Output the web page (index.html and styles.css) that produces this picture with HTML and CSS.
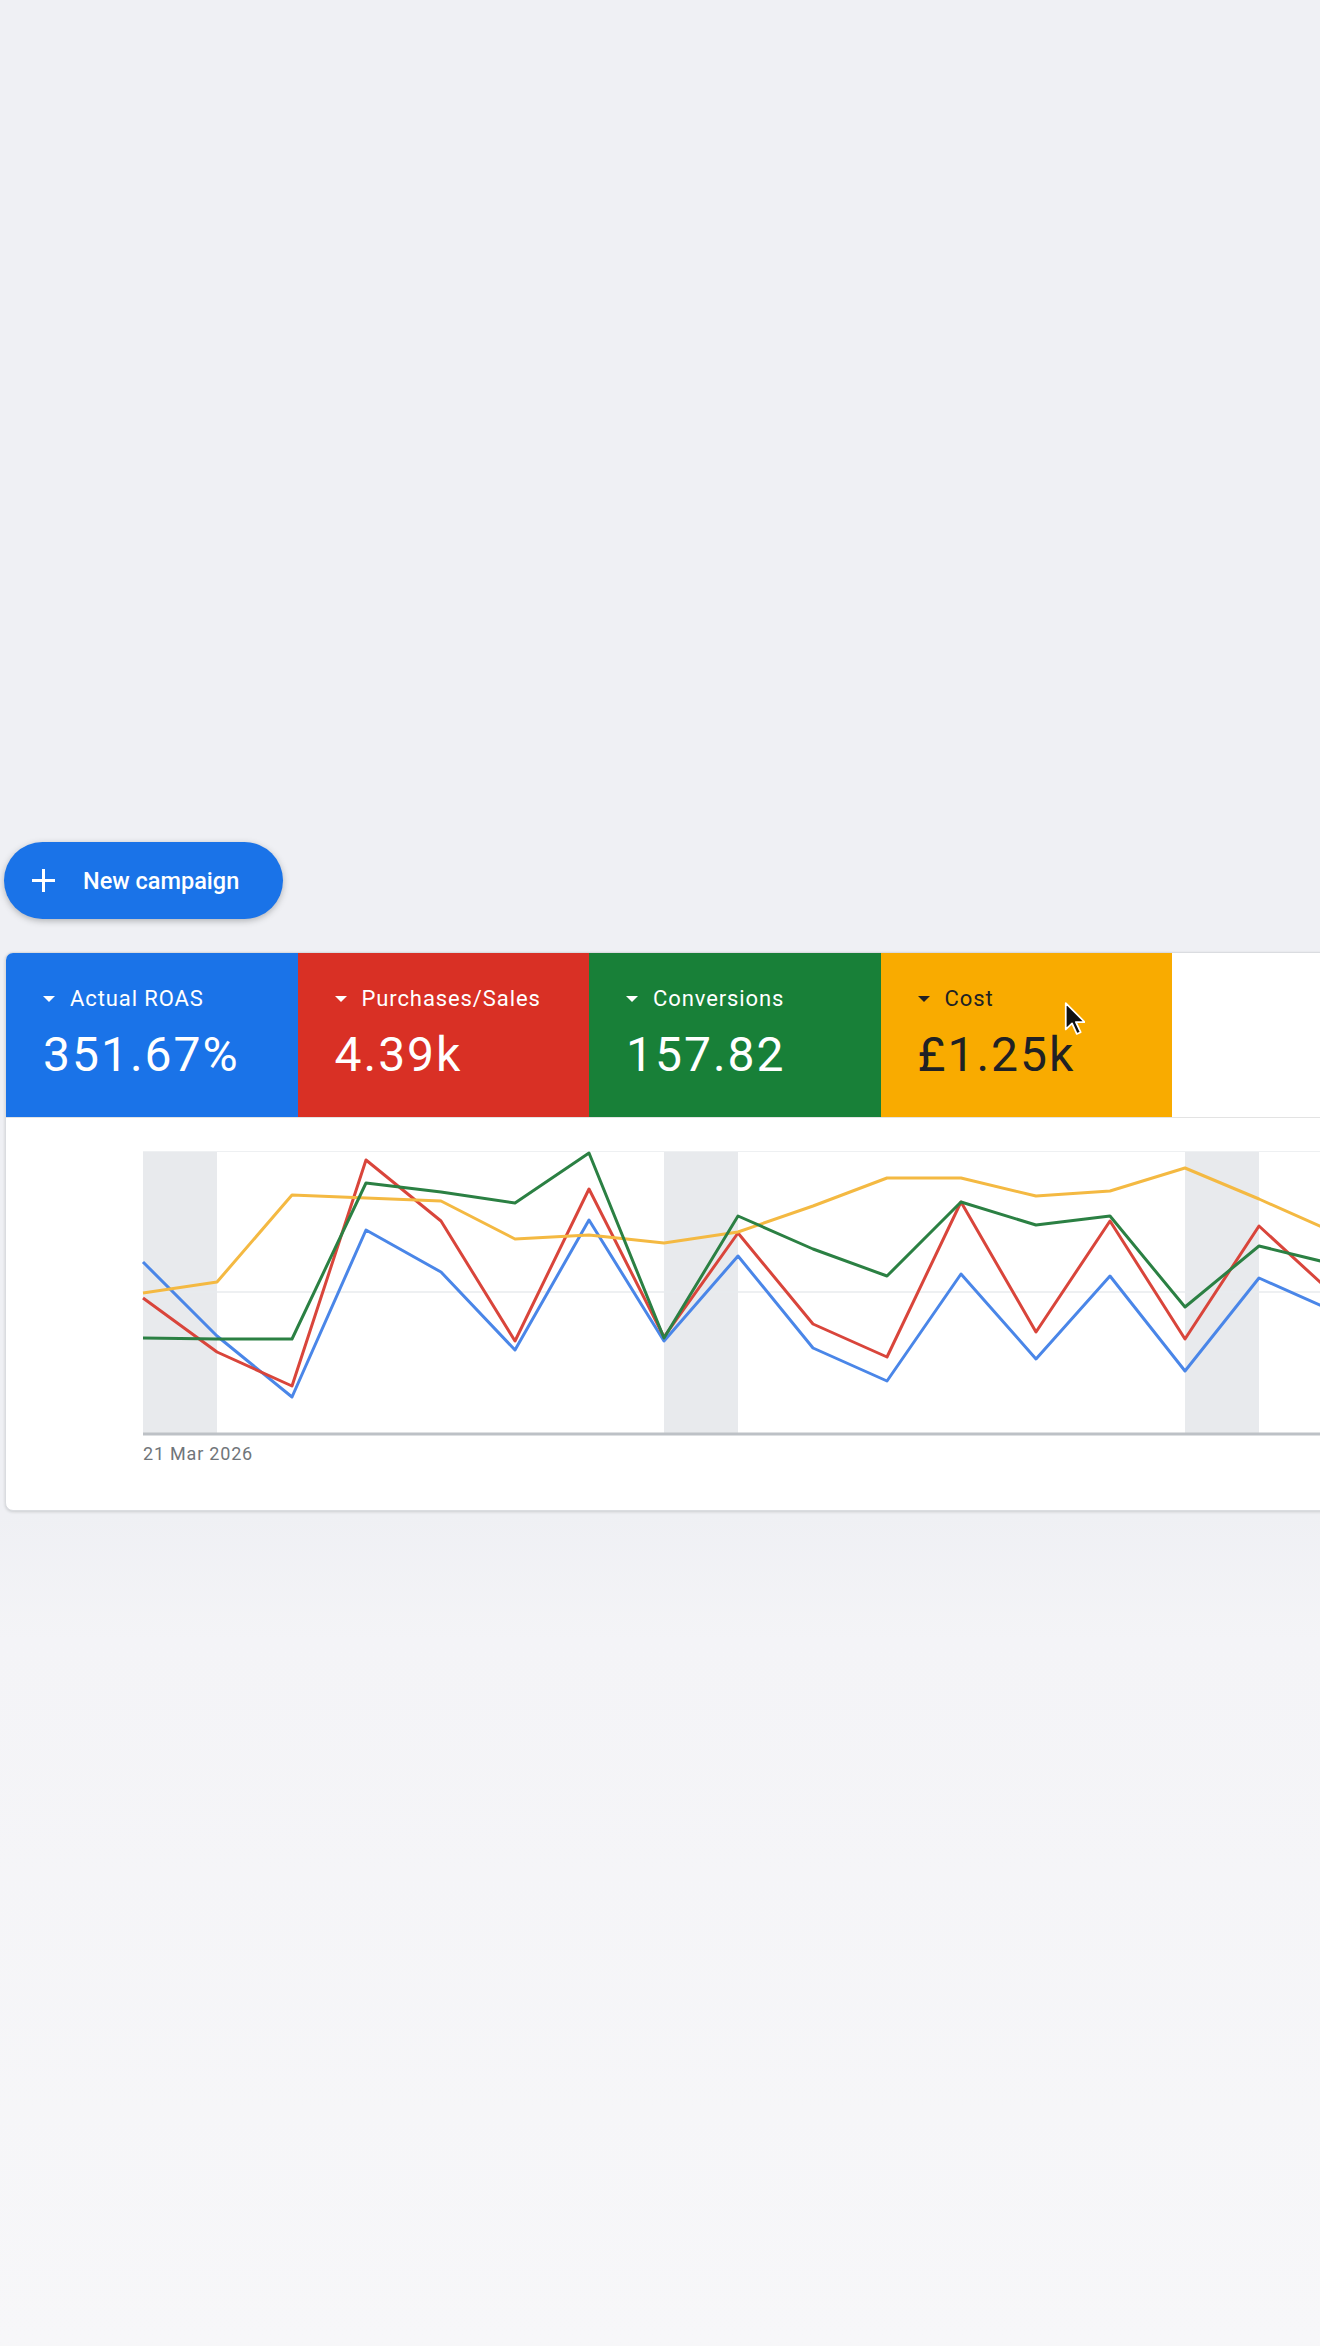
FILE: index.html
```html
<!DOCTYPE html>
<html lang="en">
<head>
  <meta charset="UTF-8" />
  <meta name="viewport" content="width=device-width, initial-scale=1.0"/>
  <title>Campaigns overview</title>
  <link rel="stylesheet" href="styles.css">
</head>
<body>
  <div class="page">
    <button class="new-btn">
      <svg class="plus" width="25" height="25" viewBox="0 0 25 25">
        <path d="M12.5 1v23M1 12.5h23" stroke="#fff" stroke-width="3" fill="none"/>
      </svg>
      New campaign
    </button>

    <div class="card">
      <!-- METRIC TILES -->
      <div class="tiles">
        <div class="tile blue">
          <div class="label"><span class="caret"></span>Actual ROAS</div>
          <div class="value">351.67%</div>
        </div>
        <div class="tile red">
          <div class="label"><span class="caret"></span>Purchases/Sales</div>
          <div class="value">4.39k</div>
        </div>
        <div class="tile green">
          <div class="label"><span class="caret"></span>Conversions</div>
          <div class="value">157.82</div>
        </div>
        <div class="tile yellow">
          <div class="label"><span class="caret"></span>Cost</div>
          <div class="value">£1.25k</div>
          <svg class="pointer" width="21" height="34" viewBox="0 0 12 19">
            <path d="M1 1v15l3.6-3.4 2.7 6 2.2-1-2.7-5.8h5z" fill="#111" stroke="#fff" stroke-width="1" stroke-linejoin="round"/>
          </svg>
        </div>
      </div>

      <!-- CHART -->
      <div class="chart">
        <svg class="plot" width="1190" height="285" viewBox="0 0 1190 285">
          <rect x="0" y="0" width="74" height="282" fill="#e8eaed"/>
          <rect x="521" y="0" width="74" height="282" fill="#e8eaed"/>
          <rect x="1042" y="0" width="74" height="282" fill="#e8eaed"/>
          <line x1="0" y1="0.5" x2="1190" y2="0.5" stroke="#eef0f2"/>
          <line x1="0" y1="141" x2="1190" y2="141" stroke="#e9ebee" stroke-width="1.5"/>
          <line x1="0" y1="283" x2="1190" y2="283" stroke="#bdc1c6" stroke-width="3"/>

          <polyline class="line" stroke="#4a86e8" points="0,111 74,185 149,246 223,79 298,121 372,199 446,69 521,190 595,105 670,197 744,230 818,123 893,208 967,125 1042,220 1116,127 1190,160"/>
          <polyline class="line" stroke="#d9453b" points="0,147 74,201 149,235 223,9 298,70 372,190 446,38 521,186 595,82 670,173 744,206 818,51 893,181 967,70 1042,188 1116,75 1190,143"/>
          <polyline class="line" stroke="#f4b942" points="0,142 74,131 149,44 223,47 298,50 372,88 446,84 521,92 595,81 670,55 744,27 818,27 893,45 967,40 1042,17 1116,48 1190,81"/>
          <polyline class="line" stroke="#2b8043" points="0,187 74,188 149,188 223,32 298,41 372,52 446,2 521,187 595,65 670,98 744,125 818,51 893,74 967,65 1042,156 1116,95 1190,113"/>
        </svg>
        <div class="axis-label">21 Mar 2026</div>
      </div>
    </div>
  </div>
</body>
</html>
```

FILE: styles.css
```css
* {
  box-sizing: border-box;
}

body {
  margin: 0;
  min-height: 2346px;
  overflow-x: hidden;
  font-family: Roboto, 'Liberation Sans', sans-serif;
  background: linear-gradient(to bottom, #eff0f4 0, #eff0f4 1515px, #f4f4f7 1640px, #f7f7f9 100%);
}

.page {
  padding: 842px 0 0 4px;
}

.new-btn {
  display: inline-flex;
  align-items: center;
  gap: 27px;
  height: 77px;
  padding: 0 44px 0 27px;
  border: none;
  border-radius: 39px;
  background: #1a73e8;
  color: #fff;
  font-family: Roboto, 'Liberation Sans', sans-serif;
  font-size: 23.5px;
  font-weight: 500;
  box-shadow: 0 2px 6px rgba(60, 64, 67, 0.35);
  cursor: pointer;
}

.plus {
  display: block;
}

.card {
  width: 1400px;
  margin: 33px 0 0 1px;
  background: #fff;
  border: 1px solid #dadce0;
  border-radius: 8px;
  box-shadow: 0 1px 3px rgba(60, 64, 67, 0.2);
  overflow: hidden;
}

.tiles {
  display: flex;
  height: 165px;
  border-bottom: 1px solid #e3e3e3;
}

.tile {
  position: relative;
  width: 291.5px;
  padding: 33px 0 0 37px;
  color: #fff;
}

.tile.blue { background: #1a73e8; }
.tile.red { background: #d93025; }
.tile.green { background: #188038; }
.tile.yellow { background: #f9ab00; color: #202124; }

.label {
  display: flex;
  align-items: center;
  font-size: 22px;
  line-height: 26px;
  letter-spacing: 0.9px;
}

.caret {
  width: 0;
  height: 0;
  margin-right: 15px;
  border-left: 6px solid transparent;
  border-right: 6px solid transparent;
  border-top: 6px solid currentColor;
}

.value {
  margin-top: 15px;
  font-size: 48px;
  line-height: 56px;
  letter-spacing: 2px;
}

.pointer {
  position: absolute;
  left: 183px;
  top: 48px;
}

.chart {
  padding: 33px 0 46px 137px;
}

.plot {
  display: block;
  overflow: visible;
}

.line {
  fill: none;
  stroke-width: 3;
  stroke-linejoin: round;
}

.axis-label {
  margin-top: 8px;
  font-size: 18px;
  line-height: 20px;
  letter-spacing: 0.8px;
  color: #70757a;
}
```
